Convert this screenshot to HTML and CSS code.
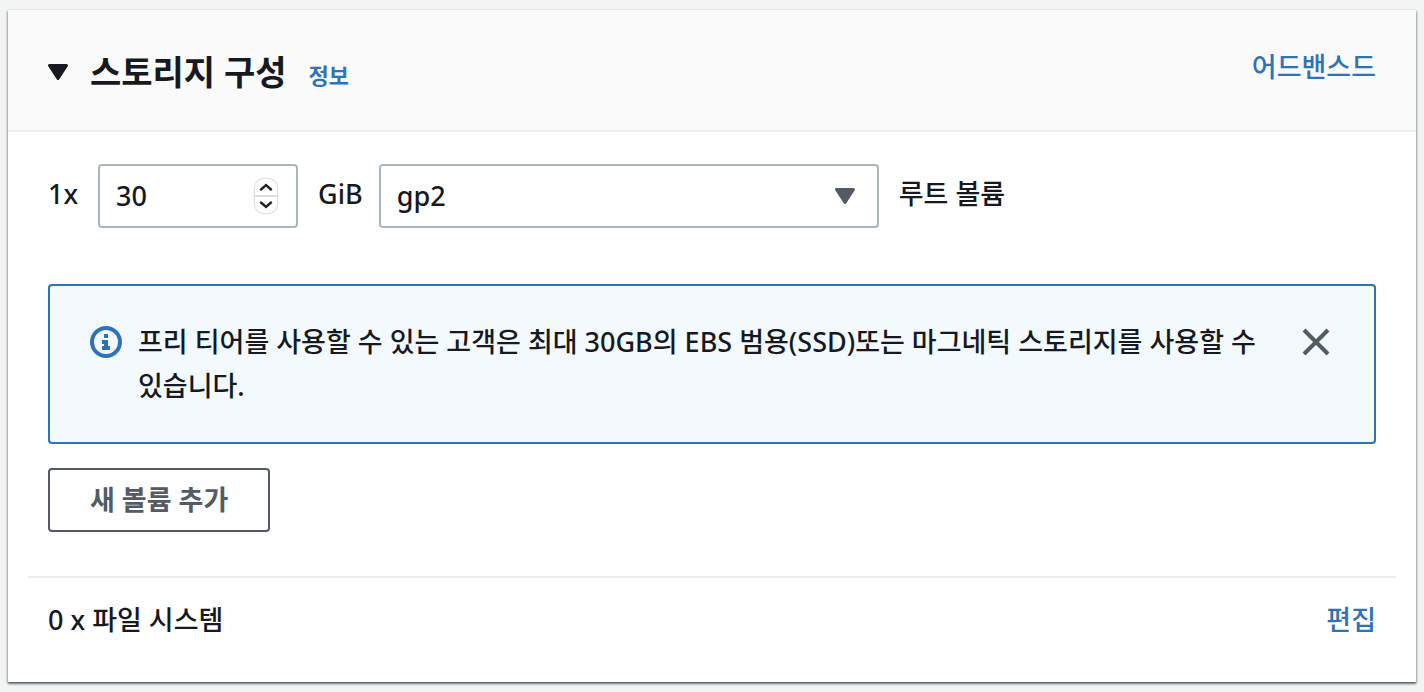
FILE: index.html
```html
<!DOCTYPE html>
<html lang="ko">
<head>
    <meta charset="UTF-8">
    <meta name="viewport" content="width=device-width, initial-scale=1.0">
    <title>스토리지 구성</title>
    <link rel="stylesheet" href="styles.css">
</head>
<body>
    <main class="card">
        <header class="card-header">
            <button type="button" class="toggle" aria-label="스토리지 구성 접기" aria-expanded="true">
                <svg width="20" height="16" viewBox="0 0 20 16"><path d="M1.5 1.5h17L10 14.5z" fill="#16191f" stroke="#16191f" stroke-width="3" stroke-linejoin="round"/></svg>
            </button>
            <h2>스토리지 구성</h2>
            <a href="#" class="info-link">정보</a>
            <a href="#" class="advanced-link">어드밴스드</a>
        </header>

        <section class="card-body">
            <div class="volume-row">
                <label for="size">1x</label>
                <div class="size-field">
                    <input type="number" id="size" min="1" value="30">
                    <div class="stepper">
                        <button type="button" id="sizeUp" aria-label="늘리기">
                            <svg width="14" height="8" viewBox="0 0 14 8"><path d="M2 6.5l5-4.5 5 4.5" fill="none" stroke="#222" stroke-width="2.4" stroke-linecap="round"/></svg>
                        </button>
                        <button type="button" id="sizeDown" aria-label="줄이기">
                            <svg width="14" height="8" viewBox="0 0 14 8"><path d="M2 1.5l5 4.5 5-4.5" fill="none" stroke="#222" stroke-width="2.4" stroke-linecap="round"/></svg>
                        </button>
                    </div>
                </div>
                <label for="type" class="unit">GiB</label>
                <div class="type-field">
                    <select id="type">
                        <option>gp2</option>
                        <option>gp3</option>
                        <option>io1</option>
                    </select>
                    <svg class="arrow" width="20" height="16" viewBox="0 0 20 16"><path d="M1.5 1.5h17L10 14.5z" fill="#545b64" stroke="#545b64" stroke-width="3" stroke-linejoin="round"/></svg>
                </div>
                <span class="volume-name">루트 볼륨</span>
            </div>

            <div class="alert" id="alert">
                <svg class="alert-icon" width="32" height="32" viewBox="0 0 32 32">
                    <circle cx="16" cy="16" r="14" fill="none" stroke="#2e73b8" stroke-width="4"/>
                    <path d="M14 8h4v4h-4zM12 14h6v6h2v4h-8v-4h2v-2h-2z" fill="#2e73b8"/>
                </svg>
                <p>프리 티어를 사용할 수 있는 고객은 최대 30GB의 EBS 범용(SSD)또는 마그네틱 스토리지를 사용할 수 있습니다.</p>
                <button type="button" class="close" id="closeAlert" aria-label="닫기">
                    <svg width="28" height="28" viewBox="0 0 28 28"><path d="M2 2l24 24M26 2L2 26" fill="none" stroke="#545b64" stroke-width="4"/></svg>
                </button>
            </div>

            <button type="button" class="button">새 볼륨 추가</button>
        </section>

        <footer class="file-systems">
            <span>0 x 파일 시스템</span>
            <a href="#">편집</a>
        </footer>
    </main>

    <script>
        const sizeInput = document.getElementById('size');

        document.getElementById('sizeUp').addEventListener('click', function() {
            sizeInput.stepUp();
        });

        document.getElementById('sizeDown').addEventListener('click', function() {
            sizeInput.stepDown();
        });

        document.getElementById('closeAlert').addEventListener('click', function() {
            document.getElementById('alert').remove();
        });
    </script>
</body>
</html>
```

FILE: styles.css
```css
* {
    box-sizing: border-box;
}
body {
    font-family: "Noto Sans", "Noto Sans CJK KR", sans-serif;
    font-size: 27px;
    font-weight: 500;
    line-height: 44px;
    color: #16191f;
    background-color: #f2f3f3;
    margin: 0;
    padding: 10px 8px;
}
button, input, select {
    font: inherit;
    color: inherit;
    margin: 0;
}
button {
    cursor: pointer;
}
svg {
    display: block;
}
a {
    color: #2e73b8;
    text-decoration: none;
}
a:hover {
    text-decoration: underline;
}
.card {
    background-color: white;
    box-shadow: 0 2px 2px 0 rgba(0, 28, 36, 0.5), 1px 1px 2px 0 rgba(0, 28, 36, 0.2), -1px 1px 2px 0 rgba(0, 28, 36, 0.2), 0 -1px 0 0 #eaeded;
}
.card-header {
    display: flex;
    align-items: center;
    background-color: #fafafa;
    border-bottom: 2px solid #eaeded;
    padding: 34px 40px 30px;
}
.toggle {
    background: none;
    border: none;
    padding: 0;
}
.card-header h2 {
    font-size: 34px;
    line-height: 56px;
    margin: 0 22px;
}
.info-link {
    font-size: 22px;
    font-weight: bold;
    padding-top: 6px;
}
.advanced-link {
    margin-left: auto;
    padding-bottom: 10px;
}
.card-body {
    padding: 32px 40px 44px;
}
.volume-row {
    display: flex;
    gap: 20px;
    line-height: 60px;
}
.size-field {
    display: flex;
    align-items: center;
    width: 200px;
    height: 64px;
    border: 2px solid #aab7b8;
    border-radius: 4px;
    padding: 0 18px 0 16px;
}
.size-field input {
    flex: 1;
    min-width: 0;
    line-height: 36px;
    border: none;
    outline: none;
    padding: 0;
    appearance: textfield;
}
.size-field input::-webkit-inner-spin-button {
    appearance: none;
    margin: 0;
}
.stepper {
    display: flex;
    flex-direction: column;
    width: 24px;
    height: 36px;
    border: 1px solid #ddd;
    border-radius: 10px;
    box-shadow: 0 0 1px rgba(0, 0, 0, 0.2);
}
.stepper button {
    flex: 1;
    display: flex;
    align-items: center;
    justify-content: center;
    background: none;
    border: none;
    padding: 0;
}
.stepper button + button {
    border-top: 2px solid #ddd;
}
.type-field {
    position: relative;
    flex: 0 1 500px;
}
.type-field select {
    display: block;
    width: 100%;
    height: 64px;
    line-height: 36px;
    background-color: white;
    border: 2px solid #aab7b8;
    border-radius: 4px;
    padding: 0 60px 0 16px;
    appearance: none;
}
.unit {
    margin-right: -4px;
}
.arrow {
    position: absolute;
    top: 24px;
    right: 24px;
    pointer-events: none;
}
.alert {
    display: flex;
    word-break: keep-all;
    background-color: #f3f9fd;
    border: 2px solid #2e73b8;
    border-radius: 4px;
    margin: 56px 0 24px;
    padding: 34px 44px 34px 40px;
}
.alert-icon {
    flex: none;
    margin: 6px 16px 0 0;
}
.alert p {
    flex: 1;
    margin: 0;
}
.close {
    flex: none;
    align-self: flex-start;
    background: none;
    border: none;
    margin-left: 32px;
    padding: 8px 0;
}
.button {
    display: block;
    height: 64px;
    font-weight: bold;
    color: #545b64;
    background-color: white;
    border: 2px solid #545b64;
    border-radius: 4px;
    padding: 0 40px;
}
.button:hover {
    background-color: #fafafa;
}
.file-systems {
    display: flex;
    justify-content: space-between;
    border-top: 2px solid #eaeded;
    margin: 0 20px;
    padding: 20px 20px 40px;
}
```
